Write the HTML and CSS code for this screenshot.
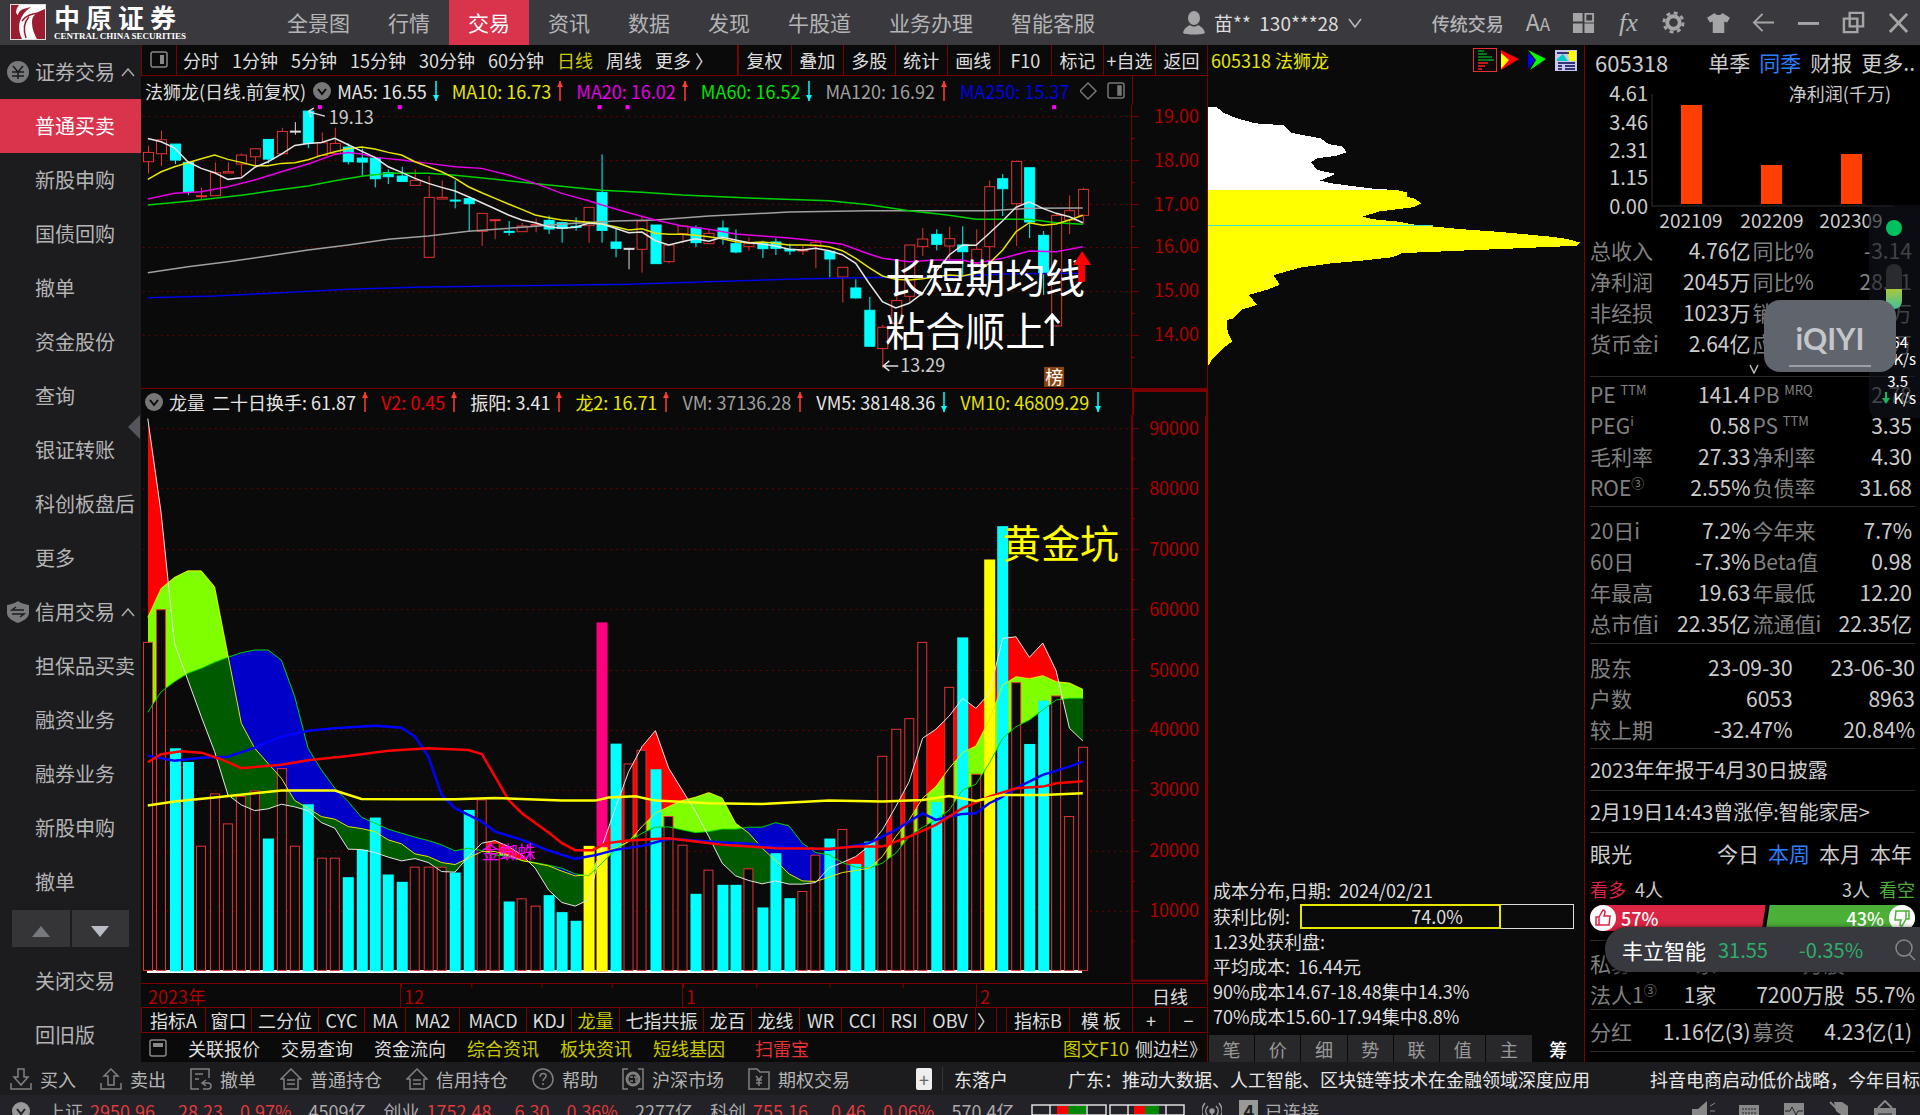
FILE: index.html
```
<!DOCTYPE html>
<html lang="zh-CN">
<head>
    <meta charset="UTF-8">
    <meta name="viewport" content="width=device-width, initial-scale=1.0">
    <title>中原证券 - 法狮龙 605318</title>
    <link rel="stylesheet" href="styles.css">
</head>
<body>
    <svg class="sprite" aria-hidden="true">
        <symbol id="i-up" viewBox="0 0 6 22"><path d="M3 1v20" stroke="#ff3c32" stroke-width="1.5"/><path d="M0 7l3-6 3 6z" fill="#ff3c32"/></symbol>
        <symbol id="i-down" viewBox="0 0 6 22"><path d="M3 1v20" stroke="#00ffff" stroke-width="1.5"/><path d="M0 15l3 6 3-6z" fill="#00ffff"/></symbol>
        <symbol id="i-drop" viewBox="0 0 18 18"><circle cx="9" cy="9" r="9" fill="#777"/><path d="M5 7l4 5 4-5" fill="none" stroke="#0a0a0a" stroke-width="2"/></symbol>
        <symbol id="i-pane" viewBox="0 0 18 18"><rect x="1" y="1" width="16" height="15" rx="2" fill="none" stroke="#888" stroke-width="1.5"/><path d="M10 4h4v9h-4z" fill="#888"/></symbol>
        <symbol id="i-house" viewBox="0 0 22 22"><path d="M1 11L11 1l10 10h-3v10H4V11zM7 12h8M7 16h8" /></symbol>
    </svg>

    <header class="topbar">
        <div class="brand">
            <svg class="brand-mark" viewBox="0 0 36 36">
                <rect x=".5" y=".5" width="35" height="35" fill="#9c1c30" stroke="#ddd"/>
                <path d="M12 35C7 24 8 12 21 3c-9 2-12 3-13 8C5 9 6 5 9 1h17l9 0v4c-9 3-13 7-13 13 0 8 3 13 5 17z" fill="#fff"/>
                <path d="M12 17c4-6 12-8 20-8M16 34c-3-9-2-16 3-21" fill="none" stroke="#9c1c30" stroke-width="1.5"/>
            </svg>
            <div>
                <div class="brand-cn"><span>中</span><span>原</span><span>证</span><span>券</span></div>
                <div class="brand-en">CENTRAL CHINA SECURITIES</div>
            </div>
        </div>
        <nav class="main-nav">
            <a href="#">全景图</a>
            <a href="#">行情</a>
            <a href="#" class="active">交易</a>
            <a href="#">资讯</a>
            <a href="#">数据</a>
            <a href="#">发现</a>
            <a href="#">牛股道</a>
            <a href="#">业务办理</a>
            <a href="#">智能客服</a>
        </nav>
        <button class="user">
            <svg width="22" height="24" viewBox="0 0 22 24" fill="#a5a5a8"><ellipse cx="11" cy="7" rx="6" ry="7"/><path d="M0 22c1-5 5-7 7-8 2 2 6 2 8 0 2 1 6 3 7 8-3 2-19 2-22 0z"/></svg>
            <span>苗**&nbsp; 130***28</span>
            <svg width="14" height="10" viewBox="0 0 14 10" fill="none" stroke="#bbb" stroke-width="1.5"><path d="M1 1l6 8 6-8"/></svg>
        </button>
        <div class="tools">
            <a href="#">传统交易</a>
            <button aria-label="字体"><span class="font-big">A</span><span class="font-small">A</span></button>
            <button aria-label="版面"><svg viewBox="0 0 24 24" fill="#a5a5a8"><path d="M1 2h10v9H1zM1 13h10v10H1zM13 13h10v10H13z"/><path d="M14 3h8v8h-8z" fill="none" stroke="#a5a5a8" stroke-width="2"/></svg></button>
            <button aria-label="公式" class="fx">fx</button>
            <button aria-label="设置"><svg viewBox="0 0 24 24" fill="none" stroke="#a5a5a8"><circle cx="12" cy="12" r="6.5" stroke-width="4"/><circle cx="12" cy="12" r="10" stroke-width="3" stroke-dasharray="4 3.85"/></svg></button>
            <button aria-label="皮肤"><svg viewBox="0 0 24 24" fill="#a5a5a8"><path d="M8 2c1 3 7 3 8 0l8 5-3 5-3-1v12H6V11l-3 1-3-5z"/></svg></button>
            <button aria-label="返回"><svg viewBox="0 0 24 24" fill="none" stroke="#a5a5a8" stroke-width="2"><path d="M23 12H2M11 3l-9 9 9 9"/></svg></button>
            <button aria-label="最小化"><svg viewBox="0 0 24 24" stroke="#a5a5a8" stroke-width="3"><path d="M1 13h22"/></svg></button>
            <button aria-label="还原"><svg viewBox="0 0 24 24" fill="none" stroke="#a5a5a8" stroke-width="2.5"><path d="M8 2h14v14H8zM2 8h14v14H2z"/></svg></button>
            <button aria-label="关闭"><svg viewBox="0 0 24 24" stroke="#a5a5a8" stroke-width="3"><path d="M3 3l18 19M21 3L3 22"/></svg></button>
        </div>
    </header>

    <main class="workspace">
        <nav class="sidebar">
            <a href="#" class="group">
                <svg width="22" height="22" viewBox="0 0 22 22"><circle cx="11" cy="11" r="11" fill="#77797b"/><path d="M6 5l5 6 5-6M5 11h12M5 15h12M11 11v7" fill="none" stroke="#1c1c1f" stroke-width="1.5"/></svg>
                证券交易
                <svg width="14" height="9" viewBox="0 0 14 9" fill="none" stroke="#aaa" stroke-width="1.5"><path d="M1 8l6-7 6 7"/></svg>
            </a>
            <a href="#" class="active">普通买卖</a>
            <a href="#">新股申购</a>
            <a href="#">国债回购</a>
            <a href="#">撤单</a>
            <a href="#">资金股份</a>
            <a href="#">查询</a>
            <a href="#">银证转账</a>
            <a href="#">科创板盘后</a>
            <a href="#">更多</a>
            <a href="#" class="group">
                <svg width="22" height="22" viewBox="0 0 22 22"><path d="M11 0c4 3 7 3 11 4v8c0 5-6 8-11 10C6 20 0 17 0 12V4c4-1 7-1 11-4z" fill="#77797b"/><path d="M17 9H5l4-3M5 13h12l-4 3" fill="none" stroke="#1c1c1f" stroke-width="1.5"/></svg>
                信用交易
                <svg width="14" height="9" viewBox="0 0 14 9" fill="none" stroke="#aaa" stroke-width="1.5"><path d="M1 8l6-7 6 7"/></svg>
            </a>
            <a href="#">担保品买卖</a>
            <a href="#">融资业务</a>
            <a href="#">融券业务</a>
            <a href="#">新股申购</a>
            <a href="#">撤单</a>
            <div class="pager">
                <button aria-label="上翻"><svg width="18" height="11" viewBox="0 0 18 11" fill="#77797f"><path d="M0 11L9 0l9 11z"/></svg></button>
                <button aria-label="下翻"><svg width="18" height="11" viewBox="0 0 18 11" fill="#b9bcc4"><path d="M0 0l9 11 9-11z"/></svg></button>
            </div>
            <a href="#">关闭交易</a>
            <a href="#">回旧版</a>
            <button class="collapse" aria-label="收起"></button>
        </nav>

        <section class="chart-col">
            <div class="period-bar">
                <button class="pane-btn" aria-label="侧栏"><svg width="18" height="18"><use href="#i-pane"/></svg></button>
                <div class="periods">
                    <button>分时</button><button>1分钟</button><button>5分钟</button><button>15分钟</button><button>30分钟</button><button>60分钟</button><button class="on">日线</button><button>周线</button><button>更多&nbsp;〉</button>
                </div>
                <div class="actions">
                    <button>复权</button><button>叠加</button><button>多股</button><button>统计</button><button>画线</button><button>F10</button><button>标记</button><button>+自选</button><button>返回</button>
                </div>
            </div>

            <div class="panel price-panel">
                <div class="panel-head">
                    <div class="legend">
                        <span class="title">法狮龙(日线.前复权)</span>
                        <svg class="drop" width="18" height="18"><use href="#i-drop"/></svg>
                        <span class="white">MA5: 16.55<svg><use href="#i-down"/></svg></span>
                        <span class="yellow">MA10: 16.73<svg><use href="#i-up"/></svg></span>
                        <span class="magenta">MA20: 16.02<svg><use href="#i-up"/></svg></span>
                        <span class="green">MA60: 16.52<svg><use href="#i-down"/></svg></span>
                        <span class="gray">MA120: 16.92<svg><use href="#i-up"/></svg></span>
                        <span class="blue clipped">MA250: 15.37</span>
                        <svg class="drop" width="46" height="20" viewBox="0 0 46 20" fill="none" stroke="#777" stroke-width="1.5"><path d="M8 2l8 8-8 8-8-8z"/><rect x="28" y="2" width="16" height="15" rx="2"/><path d="M38 5h3v9h-3z" fill="#777"/></svg>
                    </div>
                    <div class="axis-cap"></div>
                </div>
                <svg class="plot" id="price" viewBox="141 105 1067 283" role="img" aria-label="日线价格图"></svg>
            </div>

            <div class="panel volume-panel">
                <div class="panel-head">
                    <div class="legend">
                        <svg class="drop" width="18" height="18"><use href="#i-drop"/></svg>
                        <span class="title">龙量</span>
                        <span class="white">二十日换手: 61.87<svg><use href="#i-up"/></svg></span>
                        <span class="red">V2: 0.45<svg><use href="#i-up"/></svg></span>
                        <span class="white">振阳: 3.41<svg><use href="#i-up"/></svg></span>
                        <span class="yellow">龙2: 16.71<svg><use href="#i-up"/></svg></span>
                        <span class="gray">VM: 37136.28<svg><use href="#i-up"/></svg></span>
                        <span class="white">VM5: 38148.36<svg><use href="#i-down"/></svg></span>
                        <span class="yellow">VM10: 46809.29<svg><use href="#i-down"/></svg></span>
                    </div>
                    <div class="axis-cap heavy"></div>
                </div>
                <svg class="plot" id="volume" viewBox="141 415 1067 568" role="img" aria-label="成交量图"></svg>
            </div>

            <div class="date-row">
                <span>2023年</span><span class="ticks">12</span><span class="ticks">1</span><span>2</span><button>日线</button>
            </div>

            <div class="indicator-row">
                <button>指标A</button><button>窗口</button><button>二分位</button><button>CYC</button><button>MA</button><button>MA2</button><button>MACD</button><button>KDJ</button><button class="on">龙量</button><button>七指共振</button><button>龙百</button><button>龙线</button><button>WR</button><button>CCI</button><button>RSI</button><button>OBV</button><button>〉</button><i></i><button>指标B</button><button>模 板</button><button>+</button><button>−</button>
            </div>

            <div class="link-row">
                <svg width="18" height="18" viewBox="0 0 18 18"><rect x="1" y="1" width="16" height="16" rx="2" fill="none" stroke="#888" stroke-width="1.5"/><path d="M4 4h10v4H4z" fill="#888"/></svg>
                <a href="#">关联报价</a>
                <a href="#">交易查询</a>
                <a href="#">资金流向</a>
                <a href="#" class="gold">综合资讯</a>
                <a href="#" class="gold">板块资讯</a>
                <a href="#" class="gold">短线基因</a>
                <a href="#" class="alert">扫雷宝</a>
                <a href="#" class="gold push">图文F10</a>
                <a href="#" class="side-link">侧边栏》</a>
            </div>
        </section>

        <section class="chips-col">
            <div class="chips-head">
                <h2>605318 法狮龙</h2>
                <button class="picked" aria-label="筹码分布"><svg width="22" height="22" viewBox="0 0 22 22" fill="none" stroke-width="1.5"><path d="M4 2h6M4 5h9M4 8h14M4 11h16" stroke="#009a20"/><path d="M4 14h10M4 17h7M4 20h4" stroke="#ff2020"/></svg></button>
                <button aria-label="成本"><svg width="18" height="20" viewBox="0 0 18 20"><path d="M0 0l18 9L0 20z" fill="#f00"/><path d="M0 3l8 7-8 9z" fill="#ff0"/></svg></button>
                <button aria-label="周期"><svg width="18" height="20" viewBox="0 0 18 20"><path d="M0 0l18 9L2 20l6-10z" fill="#0f0"/><path d="M0 3l7 7-7 9z" fill="#00f"/></svg></button>
                <button aria-label="设置"><svg width="22" height="21" viewBox="0 0 22 21"><path d="M0 0h22v21H0z" fill="#c8c8e8"/><path d="M12 1h9v10h-6z" fill="#ff0"/><path d="M2 9l6-5 5 7H2z" fill="#0cc"/><path d="M2 3h12M3 13h17M3 16h4M10 16h10M3 19h4M10 19h10" stroke="#005" stroke-width="1.5"/></svg></button>
            </div>
            <svg class="chips" viewBox="17 300 820 820" preserveAspectRatio="none" shape-rendering="crispEdges" role="img" aria-label="筹码分布图">
                <path fill="#fff" d="M17 320L35 320 50 338 80 355 120 370 183 376 198 398 230 407 262 415 280 432 310 440 320 457 295 468 255 475 242 487 255 510 295 522 262 542 285 550 330 558 375 566 430 571H17z"/>
                <path fill="#ff0" d="M17 571L430 571 452 578 452 590 470 598 482 610 465 622 390 635 355 650 375 658 430 665 470 675 508 680 570 688 660 697 760 710 800 717 828 728 820 738 700 745 560 753 440 760 420 772 350 783 290 790 220 803 180 818 160 826 173 855 150 868 105 886 125 915 90 930 70 958 58 960 60 1000 70 1025 50 1045 25 1080 17 1100z"/>
                <path d="M17 677H508" stroke="#40e0c0" stroke-width="4"/>
            </svg>
            <div class="cost-info">
                <p>成本分布,日期:&nbsp; 2024/02/21</p>
                <div class="profit-line"><span id="profit-label">获利比例:</span><div class="profit-box" role="meter" aria-labelledby="profit-label" aria-valuenow="74"><i style="width:74%"></i><b>74.0%</b></div></div>
                <p>1.23处获利盘:</p>
                <p>平均成本:&nbsp; 16.44元</p>
                <p>90%成本14.67-18.48集中14.3%</p>
                <p>70%成本15.60-17.94集中8.8%</p>
            </div>
            <div class="chip-tabs">
                <button>笔</button><button>价</button><button>细</button><button>势</button><button>联</button><button>值</button><button>主</button><button class="on">筹</button>
            </div>
        </section>

        <aside class="info-col">
            <div class="info-head">
                <h2>605318</h2>
                <button>单季</button><button class="on">同季</button><button>财报</button><button>更多..</button>
            </div>
            <svg class="profit-chart" viewBox="1585 79 335 155" role="img" aria-label="净利润">
                <path d="M1652 94V206H1893" fill="none" stroke="#333"/>
                <g fill="#ff4000"><path d="M1681 105h21v99h-21zM1761 165h21v39h-21zM1841 154h21v50h-21z"/></g>
                <g fill="#ccc" font-size="20" text-anchor="end">
                    <text x="1648" y="101">4.61</text><text x="1648" y="130">3.46</text><text x="1648" y="158">2.31</text><text x="1648" y="185">1.15</text><text x="1648" y="214">0.00</text>
                    <text x="1891" y="101" font-size="18">净利润(千万)</text>
                </g>
                <g fill="#ccc" font-size="19" text-anchor="middle"><text x="1691" y="228">202109</text><text x="1772" y="228">202209</text><text x="1851" y="228">202309</text></g>
            </svg>
            <table class="facts">
                <tr><th>总收入</th><td>4.76亿</td><th>同比%</th><td class="dim">-3.14</td></tr>
                <tr><th>净利润</th><td>2045万</td><th>同比%</th><td class="dim">28.41</td></tr>
                <tr><th>非经损</th><td>1023万</td><th>销售额</th><td class="dim">1.2万</td></tr>
                <tr><th>货币金i</th><td>2.64亿</td><th>应收款</th><td class="dim">64万</td></tr>
            </table>
            <button class="more" aria-label="展开"><svg width="10" height="10" viewBox="0 0 10 10" fill="none" stroke="#bbb" stroke-width="1.5"><path d="M1 1l4 8 4-8"/></svg></button>
            <table class="facts ratios">
                <tr><th>PE <sup>TTM</sup></th><td>141.4</td><th>PB <sup>MRQ</sup></th><td class="dim">2.78</td></tr>
                <tr><th>PEG<sup>i</sup></th><td>0.58</td><th>PS <sup>TTM</sup></th><td>3.35</td></tr>
                <tr><th>毛利率</th><td>27.33</td><th>净利率</th><td>4.30</td></tr>
                <tr><th>ROE<sup>③</sup></th><td>2.55%</td><th>负债率</th><td>31.68</td></tr>
            </table>
            <table class="facts wide-gap">
                <tr><th>20日i</th><td>7.2%</td><th>今年来</th><td>7.7%</td></tr>
                <tr><th>60日</th><td>-7.3%</td><th>Beta值</th><td>0.98</td></tr>
                <tr><th>年最高</th><td>19.63</td><th>年最低</th><td>12.20</td></tr>
                <tr><th>总市值i</th><td>22.35亿</td><th>流通值i</th><td>22.35亿</td></tr>
            </table>
            <table class="facts holders">
                <tr><th>股东</th><td>23-09-30</td><td>23-06-30</td></tr>
                <tr><th>户数</th><td>6053</td><td>8963</td></tr>
                <tr><th>较上期</th><td>-32.47%</td><td>20.84%</td></tr>
            </table>
            <a href="#" class="notice">2023年年报于4月30日披露</a>
            <a href="#" class="notice">2月19日14:43曾涨停:智能家居&gt;</a>
            <div class="vote">
                <div class="vote-head"><span>眼光</span><button>今日</button><button class="on">本周</button><button>本月</button><button>本年</button></div>
                <div class="vote-count"><b class="bull">看多</b><span>4人</span><span class="push">3人</span><b class="bear">看空</b></div>
                <div class="vote-bar">
                    <div class="bull-bar" style="flex-grow:57">
                        <svg width="26" height="26" viewBox="0 0 26 26"><circle cx="13" cy="13" r="13" fill="#fff"/><path d="M6 12h3v8H6zM9 12l4-7c3 0 2 3 1 6h6l-1 9H9" fill="none" stroke="#dc2444" stroke-width="1.5"/></svg>57%</div>
                    <div class="bear-bar" style="flex-grow:43">43%<svg width="26" height="26" viewBox="0 0 26 26"><circle cx="13" cy="13" r="13" fill="#fff"/><path d="M20 14h-3V6h3zM17 14l-4 7c-3 0-2-3-1-6H6l1-9h10" fill="none" stroke="#4caf37" stroke-width="1.5"/></svg></div>
                </div>
            </div>
            <table class="facts owners">
                <tr><th>私募</th><td>2家</td><td>171万股</td><td>3.2%</td></tr>
                <tr><th>法人1<sup>③</sup></th><td>1家</td><td>7200万股</td><td>55.7%</td></tr>
            </table>
            <table class="facts payout">
                <tr><th>分红</th><td>1.16亿(3)</td><th>募资</th><td>4.23亿(1)</td></tr>
            </table>
        </aside>
    </main>

    <footer class="quickbar">
        <a href="#"><svg viewBox="0 0 22 22"><path d="M1 15v6h20v-6M8 1h6v8h4l-7 8-7-8h4z"/></svg>买入</a>
        <a href="#"><svg viewBox="0 0 22 22"><path d="M1 15v6h20v-6M8 17V8H4l7-7 7 7h-4v9z"/></svg>卖出</a>
        <a href="#"><svg viewBox="0 0 22 22"><path d="M9 21H1V1h18v9M5 6h8M5 11h4M13 15h5a3 3 0 010 6h-5M16 12l-4 3 4 3"/></svg>撤单</a>
        <a href="#"><svg><use href="#i-house"/></svg>普通持仓</a>
        <a href="#"><svg><use href="#i-house"/></svg>信用持仓</a>
        <a href="#"><svg viewBox="0 0 22 22"><circle cx="11" cy="11" r="10"/><path d="M8 9c0-5 7-4 6-1 0 2-3 3-3 5M11 15v2"/></svg>帮助</a>
        <a href="#"><svg viewBox="0 0 22 22"><path d="M6 1H1v20h5M16 1h5v20h-5"/><circle cx="11" cy="11" r="6" stroke-width="3"/><path d="M8 9h3M8 13h3M12 9h3M14 9v5"/></svg>沪深市场</a>
        <a href="#"><svg viewBox="0 0 22 22"><path d="M1 1h8l3 3h9v17H1zM8 8l3 4 3-4M8 12h6M8 15h6M11 12v6"/></svg>期权交易</a>
        <button class="add" aria-label="添加">+</button>
        <div class="ticker"><span>东落户</span><span>广东：推动大数据、人工智能、区块链等技术在金融领域深度应用</span><span>抖音电商启动低价战略，今年目标</span></div>
    </footer>

    <div class="status">
        <div class="status-in">
            <svg width="18" height="18" viewBox="0 0 18 18"><circle cx="9" cy="9" r="9" fill="#999"/><path d="M5 7l4 5 4-5" fill="none" stroke="#222228" stroke-width="2"/></svg>
            <span>上证</span><b>2950.96</b><b>28.23</b><b>0.97%</b><span>4509亿</span>
            <span>创业</span><b>1752.48</b><b>6.30</b><b>0.36%</b><span>2277亿</span>
            <span>科创</span><b>755.16</b><b>0.46</b><b>0.06%</b><span>570.4亿</span>
            <svg width="154" height="14" viewBox="0 0 154 14"><path d="M26 2h11v8H26zM103 2h11v8h-11z" fill="#f00"/><path d="M37 2h18v8H37zM114 2h14v8h-14z" fill="#080"/><path d="M1 1h74v10H1zM19 1v10M56 1v10M79 1h74v10H79zM97 1v10M135 1v10" fill="none" stroke="#ddd" stroke-width="1.5"/><path d="M4 14h70M82 14h70" stroke="#080" stroke-width="2"/></svg>
            <svg width="20" height="20" viewBox="0 0 20 20" fill="none" stroke="#999" stroke-width="1.5"><circle cx="10" cy="10" r="2" fill="#999"/><path d="M6 5c-3 3-3 7 0 10M14 5c3 3 3 7 0 10M3 2c-4 5-4 11 0 16M17 2c4 5 4 11 0 16M10 12v8"/></svg>
            <em>4</em><span class="conn">已连接</span>
            <svg class="status-icons" width="206" height="22" viewBox="0 0 206 22" fill="#888">
                <path d="M0 9h6l9-8v20l-9-6H0z"/><path d="M18 6l5-3M18 11h5M18 15l5 3" stroke="#888"/>
                <path d="M47 5h20v14H47z"/><path d="M50 9h14M50 13h14" stroke="#222228" stroke-dasharray="2 1"/>
                <path d="M92 3h20v16H92z"/><path d="M93 11h5l2-4 4 8 2-4h5" fill="none" stroke="#222228"/>
                <path d="M142 2h8l6 4v14l-12-9z"/><path d="M138 2l18 18" stroke="#888" stroke-width="2"/>
                <path d="M182 8h22v13h-22z"/><path d="M186 8l7-7 7 7" fill="none" stroke="#888" stroke-width="2"/><path d="M186 14h14" stroke="#222228"/>
            </svg>
        </div>
    </div>

    <!-- desktop widgets floating above the terminal -->
    <div class="net-widget">
        <i class="dot"></i>
        <i class="gauge"></i>
        <p><b>64</b><small>K/s</small></p>
        <p><b>3.5</b><small><svg width="8" height="12" viewBox="0 0 8 12" fill="#12b85c"><path d="M3 0h2v6h3l-4 6-4-6h3z"/></svg> K/s</small></p>
    </div>
    <div class="iqiyi">iQIYI</div>
    <div class="stock-toast"><b>丰立智能</b><span>31.55</span><span>-0.35%</span>
        <svg width="22" height="22" viewBox="0 0 22 22" fill="none" stroke="#888" stroke-width="1.5"><circle cx="10" cy="9" r="8"/><path d="M15 15l6 6"/></svg>
    </div>

    <script src="script.js"></script>
</body>
</html>
```
FILE: styles.css
```
* {
    margin: 0;
    padding: 0;
    box-sizing: border-box;
}

body {
    display: grid;
    grid-template-rows: 45px minmax(0, 1fr) 33px 20px;
    height: 100vh;
    overflow: hidden;
    background: #0a0a0a;
    color: #ddd;
    font-family: "Noto Sans CJK SC", "Liberation Sans", sans-serif;
    font-size: 18px;
    line-height: 24px;
    white-space: nowrap;
}

a {
    color: inherit;
    text-decoration: none;
}

button {
    background: none;
    border: none;
    color: inherit;
    font: inherit;
    cursor: pointer;
}

svg {
    flex: none;
}

.sprite {
    position: absolute;
    width: 0;
    height: 0;
}

.white { color: #e6e6e6; }
.yellow { color: #e6e600; }
.magenta { color: #e600e6; }
.green { color: #00e600; }
.gray { color: #a0a0a0; }
.blue { color: #0000e6; }
.red { color: #e60000; }
.push { margin-left: auto; }

/* Top bar */
.topbar {
    display: flex;
    align-items: center;
    background: #3a3a3e;
    color: #b4b4b6;
}

.brand {
    display: flex;
    gap: 8px;
    width: 268px;
    padding-left: 10px;
    color: #fff;
}

.brand-mark {
    width: 36px;
    height: 36px;
}

.brand-cn {
    display: flex;
    gap: 6px;
    font-size: 26px;
    font-weight: 700;
    line-height: 26px;
}

.brand-en {
    font: bold 9px/12px "Liberation Serif", serif;
}

.main-nav {
    display: flex;
    height: 100%;
}

.main-nav a {
    padding: 0 19px;
    font-size: 21px;
    line-height: 45px;
}

.main-nav .active {
    background: #da334c;
    color: #fff;
}

.user {
    display: flex;
    align-items: center;
    gap: 9px;
    margin-left: auto;
    color: #ddd;
    font-size: 19px;
}

.tools {
    display: flex;
    align-items: center;
    gap: 22px;
    margin-left: 70px;
    padding-right: 10px;
}

.tools svg {
    display: block;
    width: 23px;
    height: 23px;
}

.tools .fx {
    width: 23px;
    font: italic 26px/26px "Liberation Serif", serif;
}

.tools a {
    font-weight: 500;
}

.font-big {
    font-size: 23px;
}

.font-small {
    font-size: 17px;
}

/* Layout */
.workspace {
    display: grid;
    grid-template-columns: 141px minmax(0, 1fr) 377px 335px;
    min-height: 0;
}

.sidebar {
    position: relative;
    display: flex;
    flex-direction: column;
    background: #1c1c1f;
    color: #b4b4b4;
    font-size: 20px;
}

.sidebar a {
    height: 54px;
    padding-left: 35px;
    line-height: 54px;
}

.sidebar .active {
    background: #da334c;
    color: #fff;
}

.sidebar .group {
    display: flex;
    align-items: center;
    gap: 6px;
    padding-left: 7px;
}

.pager {
    display: flex;
    gap: 2px;
    margin: 1px 12px 7px 12px;
}

.pager button {
    flex: 1;
    height: 37px;
    background: #353537;
}

.collapse {
    position: absolute;
    top: 370px;
    right: 1px;
    border: 12px solid transparent;
    border-left: none;
    border-right-color: #55555a;
}

/* Chart column */
.chart-col {
    display: grid;
    grid-template-rows: 31px minmax(0, 313fr) minmax(0, 594fr) 24px 26px 29px;
    border: solid #7c0000;
    border-width: 0 1px 0 0;
}

.period-bar {
    display: flex;
    border-bottom: 1px solid #7c0000;
    border-left: 1px solid #7c0000;
}

.pane-btn {
    width: 35px;
    border-right: 1px solid #7c0000;
}

.pane-btn svg {
    display: block;
    margin: auto;
}

.periods {
    flex: 559;
    display: flex;
    gap: 13px;
    padding-left: 6px;
    overflow: hidden;
}

.actions {
    flex: 473;
    display: grid;
    grid-template-columns: repeat(9, 1fr);
    border-left: 2px solid #7c0000;
}

.actions button + button {
    border-left: 1px solid #7c0000;
}

.periods .on, .indicator-row .on {
    color: #c8c800;
}

.panel {
    display: flex;
    flex-direction: column;
    min-height: 0;
}

.price-panel {
    border-bottom: 1px solid #7c0000;
}

.panel-head {
    display: grid;
    grid-template-columns: minmax(0, 1fr) 75px;
    height: 29px;
}

.volume-panel .panel-head {
    height: 26px;
}

.legend {
    display: flex;
    align-items: center;
    padding-left: 4px;
    overflow: hidden;
}

.legend span {
    display: flex;
    align-items: center;
    margin-right: 13px;
}

.legend span svg {
    width: 6px;
    height: 22px;
    margin-left: 6px;
}

.legend .title {
    margin-right: 7px;
}

.legend .drop {
    margin-right: 6px;
}

.legend .clipped {
    flex: 1;
    min-width: 0;
    margin-right: 0;
    overflow: hidden;
}

.axis-cap {
    border-left: 1px solid #7c0000;
}

.axis-cap.heavy {
    border: solid #7c0000;
    border-width: 3px 1px 0 2px;
}

.plot {
    flex: 1;
    display: block;
    width: 100%;
    min-height: 0;
}

.date-row {
    display: grid;
    grid-template-columns: 259fr 282fr 294fr 156fr 75fr;
    border-top: 1px solid #7c0000;
    color: #b00000;
}

.date-row span {
    padding-left: 3px;
}

.date-row span:first-child {
    padding-left: 7px;
}

.date-row span + span, .date-row button {
    border-left: 1px solid #7c0000;
}

.date-row button {
    color: #ddd;
}

.ticks {
    background: linear-gradient(90deg, #7c0000 1px, transparent 1px) 0 0 / 25% 4px repeat-x;
}

.indicator-row {
    display: grid;
    grid-template-columns: 64fr 46fr 67fr 46fr 41fr 54fr 67fr 45fr 48fr 84fr 48fr 48fr 42fr 42fr 41fr 51fr 21fr 10fr 63fr 63fr 37fr 38fr;
    border: solid #7c0000;
    border-width: 1px 0;
}

.indicator-row > * {
    min-width: 0;
    border-left: 1px solid #7c0000;
}

.link-row {
    display: flex;
    align-items: center;
    gap: 21px;
    padding: 0 8px;
}

.link-row .alert {
    margin-left: 9px;
    color: #e63232;
}

.gold {
    color: #c8c800;
}

.side-link {
    margin: 0 -8px 0 -15px;
}

/* Chip distribution */
.chips-col {
    display: flex;
    flex-direction: column;
    border-right: 1px solid #7c0000;
}

.chips-head {
    display: flex;
    align-items: center;
    gap: 9px;
    height: 30px;
    padding: 0 7px 0 3px;
}

.chips-head h2 {
    flex: 1;
    color: #e6e600;
    font-size: 18px;
    font-weight: 400;
}

.chips-head svg {
    display: block;
}

.chips-head .picked {
    border: 1px solid #e63232;
    margin-right: -5px;
}

.chips {
    width: 100%;
    height: 273px;
    margin-top: 25px;
}

.cost-info {
    margin-top: auto;
    padding: 0 10px 6px 5px;
}

.cost-info p {
    line-height: 25px;
}

.profit-line {
    display: flex;
    align-items: center;
    gap: 10px;
    height: 26px;
}

.profit-box {
    flex: 1;
    display: grid;
    height: 25px;
    border: 1px solid #ddd;
}

.profit-box i {
    grid-area: 1 / 1;
    margin: -1px;
    border: 2px solid #e6e600;
}

.profit-box b {
    grid-area: 1 / 1;
    font-weight: 400;
    line-height: 23px;
    text-align: center;
}

.chip-tabs {
    display: grid;
    grid-template-columns: repeat(7, 45fr) 51fr;
    gap: 1px;
    padding-left: 1px;
    color: #999;
}

.chip-tabs button {
    height: 27px;
    background: #28282b;
}

.chip-tabs .on {
    background: none;
    color: #fff;
    font-weight: 500;
}

/* Fundamentals */
.info-col {
    display: flex;
    flex-direction: column;
    padding: 0 5px;
    background: #000;
    color: #ccc;
    font-size: 21px;
}

.info-head {
    display: flex;
    align-items: center;
    gap: 9px;
    height: 34px;
}

.info-head h2 {
    flex: 1;
    padding-left: 5px;
    font-size: 22px;
    font-weight: 400;
}

.info-head .on, .vote-head .on {
    color: #2a80ff;
}

.profit-chart {
    display: block;
    margin: 0 -5px;
}

.facts {
    width: 100%;
    border-spacing: 0;
    table-layout: fixed;
}

.facts tr {
    height: 31px;
}

.facts th {
    color: #808080;
    font-weight: 400;
    text-align: left;
}

.facts td {
    text-align: right;
    padding-right: 2px;
}

.facts th, .facts td {
    width: 25%;
}

.facts td:last-child {
    padding-right: 3px;
}

.facts .dim {
    color: #888;
}

.facts sup {
    font-size: 13px;
    line-height: 12px;
}

.more {
    height: 18px;
    padding-left: 2px;
    line-height: 8px;
}

.facts.ratios, .facts.wide-gap, .facts.holders, .facts.owners, .facts.payout {
    border-top: 1px solid #2a2a2a;
}

.ratios {
    padding: 1px 0 4px;
}

.wide-gap {
    padding: 7px 0 5px;
}

.holders {
    padding: 7px 0 4px;
}

.facts.holders th {
    width: 80px;
}

.facts.holders td {
    width: 122px;
    padding-right: 0;
}

.notice {
    height: 42px;
    border-top: 1px solid #2a2a2a;
    font-size: 20px;
    line-height: 42px;
}

.vote {
    border-top: 1px solid #2a2a2a;
    padding-bottom: 9px;
}

.vote-head, .vote-count {
    display: flex;
    align-items: center;
    gap: 9px;
    height: 40px;
}

.vote-head {
    padding-right: 3px;
}

.vote-head span {
    margin-right: auto;
}

.vote-count {
    height: 32px;
    font-size: 18px;
}

.vote-count b {
    font-weight: 400;
}

.bull {
    color: #dc2444;
}

.bear {
    color: #4caf37;
}

.vote-bar {
    display: flex;
    color: #fff;
    font-size: 18px;
    font-weight: 500;
}

.bull-bar, .bear-bar {
    display: flex;
    align-items: center;
    gap: 5px;
    height: 26px;
    background: #dc2444;
    border-radius: 13px 0 0 13px;
    clip-path: polygon(0 0, 100% 0, calc(100% - 4px) 100%, 0 100%);
}

.bear-bar {
    justify-content: flex-end;
    background: #4caf37;
    border-radius: 0 13px 13px 0;
    clip-path: polygon(4px 0, 100% 0, 100% 100%, 0 100%);
}

.owners {
    padding: 6px 0 0;
}

.facts.owners th {
    width: 72px;
}

.facts.owners td {
    width: 54px;
    padding-right: 0;
}

.facts.owners td:nth-child(3) {
    width: 128px;
}

.facts.owners td:last-child {
    width: 70px;
}

.facts.payout {
    padding: 5px 0;
    border-bottom: 1px solid #2a2a2a;
}

.facts.payout th {
    width: 45px;
}

.facts.payout td {
    width: 115px;
}

/* Bottom bars */
.quickbar {
    display: flex;
    align-items: center;
    gap: 24px;
    padding-left: 10px;
    overflow: hidden;
    background: #1c1c1f;
    color: #b4b4b4;
}

.quickbar a {
    display: flex;
    align-items: center;
    gap: 8px;
}

.quickbar svg {
    width: 22px;
    height: 22px;
    fill: none;
    stroke: #808080;
    stroke-width: 1.5;
}

.add {
    width: 22px;
    height: 22px;
    margin-left: 42px;
    background: #eee;
    border-radius: 2px;
    color: #666;
    line-height: 20px;
}

.ticker {
    display: flex;
    gap: 60px;
    margin-left: -14px;
    padding-left: 11px;
    border-left: 1px solid #333;
    color: #e6e6e6;
}

.status {
    overflow: hidden;
    background: #222228;
    color: #aaa;
}

.status-in {
    display: flex;
    align-items: center;
    gap: 17px;
    height: 32px;
    padding-left: 12px;
}

.status b {
    color: #e03c3c;
    font-weight: 400;
}

.status b:nth-of-type(3n + 1) {
    margin-left: -10px;
    margin-right: 6px;
}

.status em {
    padding: 0 4px;
    background: #999;
    color: #222;
    font-style: normal;
    font-weight: 700;
    line-height: 22px;
}

.conn {
    margin-left: -10px;
}

.status-icons {
    margin: 0 22px 0 auto;
}

/* Floating widgets */
.net-widget {
    position: absolute;
    top: 205px;
    right: 0;
    width: 51px;
    height: 213px;
    padding: 15px 4px 0 12px;
    background: rgba(18, 20, 28, 0.6);
    border-radius: 10px 0 0 10px;
    color: #fff;
    font-size: 16px;
    line-height: 17px;
    text-align: right;
}

.net-widget i {
    display: block;
    width: 16px;
    margin-left: 5px;
}

.dot {
    height: 16px;
    border-radius: 50%;
    background: #00c060;
}

.gauge {
    height: 45px;
    margin: 28px 0 24px;
    border-radius: 8px;
    background: linear-gradient(#2a2b2f 55%, #a8c838 55%, #40c0a0);
}

.net-widget b, .net-widget small {
    display: block;
    font-size: 15px;
    font-weight: 400;
}

.net-widget b {
    padding-right: 8px;
}

.net-widget p + p {
    margin-top: 5px;
}

.iqiyi {
    position: absolute;
    top: 300px;
    right: 24px;
    width: 132px;
    height: 72px;
    padding: 20px 25px 0;
    border-radius: 16px;
    background: #60646c;
    color: #c4c6ca;
    font: bold 30px/36px Lato, sans-serif;
    text-align: center;
}

.iqiyi::after {
    content: "";
    display: block;
    height: 2px;
    margin-top: 9px;
    background: #9b9ea3;
}

.stock-toast {
    position: absolute;
    top: 927px;
    right: 0;
    display: flex;
    align-items: center;
    width: 315px;
    height: 45px;
    padding: 0 4px 0 17px;
    border-radius: 22px 0 0 22px;
    background: #38383f;
    box-shadow: 0 2px 6px #000;
    color: #2fae6a;
    font-size: 20px;
}

.stock-toast b {
    margin-right: 12px;
    color: #fff;
    font-size: 21px;
    font-weight: 400;
}

.stock-toast span + span {
    margin: 0 auto;
}
```
FILE: script.js
```
// Series are stored in thirds of a plot unit, one value per trading day.
const X0 = 147.8, STEP = 13.37;
const x = i => X0 + i * STEP;
const RED = '#e63232', CYAN = '#00ffff', BG = '#0a0a0a', AXIS = '#7c0000';

// [kind, high, body top, body bottom, low]
const candles = [
    ['r',437,457,485,520],['r',391,419,461,498],['c',432,432,480,492],['c',487,487,577,585],['r',563,587,587,600],
    ['r',487,518,587,587],['r',487,515,519,519],['r',460,465,492,530],['r',446,446,470,495],['c',418,418,477,490],
    ['r',383,394,461,461],['w',366,393,393,404],['c',333,333,430,444],['r',397,428,466,466],['r',383,430,460,460],
    ['c',430,441,485,493],['c',445,474,486,527],['c',470,474,536,562],['c',508,518,530,552],['c',500,528,544,544],
    ['r',508,541,556,556],['r',528,592,772,772],['r',541,592,597,597],['c',541,600,600,625],['c',590,596,611,695],
    ['r',640,640,694,738],['r',657,659,659,718],['c',663,694,694,706],['r',668,678,695,695],['r',655,673,677,697],
    ['c',647,661,687,702],['c',665,668,685,728],['c',652,679,679,692],['r',622,622,677,728],['c',463,577,691,728],
    ['c',685,726,745,772],['w',745,745,745,808],['r',648,663,748,818],['c',675,675,791,791],['r',735,735,785,790],
    ['r',675,678,701,730],['c',676,684,728,741],['r',690,700,731,731],['c',661,684,713,734],['c',688,731,756,760],
    ['r',712,731,740,752],['c',722,731,746,774],['c',715,726,745,765],['c',731,748,753,765],['r',738,750,753,765],
    ['r',722,727,738,805],['c',751,754,777,832],['r',802,802,831,908],['c',838,864,894,896],['c',891,931,1039,1039],
    ['r',975,982,1046,1105],['r',780,902,970,975],['r',735,735,889,908],['r',684,717,740,768],['c',688,703,733,751],
    ['r',680,716,738,777],['c',679,735,755,825],['r',688,748,788,800],['r',541,560,740,785],['c',522,536,566,648],
    ['r',481,484,611,738],['c',503,503,666,714],['c',693,706,820,885],['r',640,646,978,980],['r',586,632,660,702],
    ['r',563,568,646,672]
];

const ma5 = [415,425,443,485,505,518,538,533,502,485,462,436,430,427,415,434,453,472,500,517,535,550,562,573,590,608,626,645,660,668,680,685,682,670,672,685,698,696,722,735,725,716,724,712,720,728,732,738,748,750,745,752,764,790,850,905,924,910,880,815,765,735,736,700,662,622,605,625,640,650,668];
const ma10 = [538,515,500,488,476,465,478,487,497,497,490,488,479,466,455,446,441,447,457,465,485,500,515,535,560,578,595,612,628,645,653,660,663,667,672,680,690,686,700,703,703,706,710,716,725,728,726,730,735,735,736,740,752,775,803,828,838,840,836,830,825,828,820,790,750,695,668,676,672,660,646];

// sparse lines: index, value, index, value ...
const ma20 = [0,597,2,580,4,575,6,560,8,540,10,515,12,492,14,463,15,457,16,462,17,472,19,480,21,490,23,500,25,505,27,525,29,550,31,580,33,602,34,615,36,638,38,660,40,678,42,688,44,702,46,708,48,714,50,722,52,733,54,762,55,775,57,785,59,780,61,780,62,790,64,775,66,753,68,755,70,740];
const ma60 = [0,615,3,604,5,595,7,586,9,574,12,558,14,542,16,529,18,520,21,520,23,526,26,538,30,555,34,571,37,577,40,585,45,594,51,602,54,614,57,632,60,646,62,658,66,658,68,668,70,673];
const ma120 = [0,818,3,800,6,785,9,768,12,750,15,735,18,718,21,708,24,694,28,682,32,670,35,663,38,660,42,648,48,636,54,632,63,632,66,625,70,624];
const ma250 = [0,893,5,888,10,878,15,868,20,862,28,857,36,853,42,845,48,838,53,833,60,830,64,822,70,820];

const volumes = [
    'r787','r689','c1105','c1146','r1399','r1242','r1332','r1250','r1233','c1376','r1166','r1399','c1273','r1435','r1435',
    'c1492','c1410','c1313','c1484','c1506','r1462','r1462','r1462','c1478','c1290','r1260','r1390','c1565','r1557','r1579',
    'c1546','c1597','c1623','y1398','m727','c1091','r1152','r1111','c1168','r1310','r1396','c1542','r1471','c1515','c1515',
    'r1467','c1583','c1420','c1555','r1535','r1426','c1376','r1349','c1452','c1385','r1129','r1048','r1016','r787','c1267',
    'r922','c772','r1183','y538','c438','r908','c1092','c962','r948','r1310','r1102'
];
const vm5 = [115,400,790,900,1010,1115,1245,1275,1292,1287,1273,1281,1292,1328,1345,1408,1409,1418,1432,1443,1436,1448,1475,1477,1430,1390,1382,1400,1425,1465,1530,1568,1579,1560,1400,1285,1175,1100,1052,1165,1230,1295,1370,1450,1488,1502,1512,1503,1513,1513,1508,1464,1448,1430,1398,1350,1280,1205,1075,1048,1008,955,985,940,775,770,832,789,872,1045,1083];
const vm10 = [712,625,592,572,572,620,825,1030,1105,1150,1195,1262,1285,1310,1318,1340,1346,1355,1380,1392,1422,1430,1448,1454,1435,1415,1415,1425,1442,1450,1458,1474,1488,1485,1420,1405,1385,1340,1300,1280,1262,1252,1238,1254,1330,1360,1405,1442,1482,1503,1505,1492,1478,1472,1465,1430,1370,1320,1255,1220,1165,1118,1098,1020,915,890,896,887,905,909,928];
const vm20 = [997,935,905,880,865,847,832,818,810,810,840,950,1105,1170,1225,1265,1312,1330,1348,1360,1372,1382,1395,1413,1405,1412,1425,1430,1442,1448,1456,1465,1482,1488,1450,1410,1385,1360,1342,1341,1350,1358,1355,1348,1348,1342,1342,1328,1338,1390,1418,1425,1448,1462,1465,1450,1420,1370,1342,1320,1290,1230,1213,1150,1075,1040,1020,990,960,955,955];
const thickBlue = [0,1127,2,1142,4,1133,6,1130,8,1103,10,1070,12,1052,14,1045,17,1037,19,1043,20,1070,21,1130,22,1245,23,1285,24,1305,25,1325,26,1355,28,1380,30,1412,32,1437,33.6,1425,35,1410,37,1398,39,1377,41,1382,43,1388,45,1392,49,1405,51,1410,54,1390,56,1350,58,1300,59,1320,60,1310,61,1302,62,1300,63,1270,63.8,1255,65,1225,67,1185,69,1160,70,1145];
const thickRed = [0,1147,1,1123,2.5,1114,4,1118,5.5,1138,7,1165,10,1154,12,1141,15,1128,18,1112,21,1105,24,1110,25,1122,26,1190,27,1260,28,1300,30,1358,31,1390,32,1411,33.3,1411,34.3,1390,36,1382,39,1375,43,1395,47,1405,51,1407,53,1400,55,1400,57,1370,59,1335,61,1285,63,1250,65,1225,67,1220,68,1210,70,1204];
const thickYellow = [0,1277,2,1265,5,1253,8,1240,10,1232,14,1232,16,1257,19,1258,23,1258,26,1254,31,1262,33.5,1262,34.5,1253,36.5,1249,38,1262,42,1270,46,1272,51,1262,55,1265,58,1260,60,1248,62,1263,64,1245,67,1245,70,1240];

const dense = a => a.flatMap((v, i) => [i, v]);

function line(pairs, y, color, width) {
    let d = '';
    for (let i = 0; i < pairs.length; i += 2) {
        d += `${x(pairs[i]).toFixed(1)},${y(pairs[i + 1]).toFixed(1)} `;
    }
    return `<polyline points="${d}" fill="none" stroke="${color}" stroke-width="${width}"/>`;
}

function text(tx, ty, size, color, str, extra = '') {
    return `<text x="${tx}" y="${ty}" font-size="${size}" fill="${color}" ${extra}>${str}</text>`;
}

function grid(y0, step, labels) {
    let out = '';
    labels.forEach((label, i) => {
        const gy = Math.round(y0 + i * step) + 0.5;
        out += `<path d="M143 ${gy}H1131" stroke="${AXIS}" stroke-dasharray="1.5 4.5"/>`;
        out += `<path d="M1132 ${gy}h8M1132 ${gy + Math.round(step / 2)}h4" stroke="${AXIS}"/>`;
        out += text(1200, gy + 6, 18, '#b00000', label, 'text-anchor="end"');
    });
    return out;
}

// Area between two series, recoloured where they cross
function band(a, b, y, above, below) {
    let out = '';
    const quad = (x1, a1, b1, x2, a2, b2, color) =>
        `<path d="M${x1} ${y(a1)}L${x2} ${y(a2)} ${x2} ${y(b2)} ${x1} ${y(b1)}z" fill="${color}"/>`;
    for (let i = 0; i < a.length - 1; i++) {
        const d1 = b[i] - a[i], d2 = b[i + 1] - a[i + 1];
        if (d1 * d2 < 0) {
            const t = d1 / (d1 - d2);
            const m = a[i] + (a[i + 1] - a[i]) * t;
            out += quad(x(i), a[i], b[i], x(i + t), m, m, d1 > 0 ? above : below);
            out += quad(x(i + t), m, m, x(i + 1), a[i + 1], b[i + 1], d2 > 0 ? above : below);
        } else {
            out += quad(x(i), a[i], b[i], x(i + 1), a[i + 1], b[i + 1], d1 + d2 > 0 ? above : below);
        }
    }
    return `<g shape-rendering="crispEdges">${out}</g>`;
}

function drawPrice() {
    const y = v => v / 3;
    let out = grid(116, 43.8, ['19.00', '18.00', '17.00', '16.00', '15.00', '14.00']);
    out += `<path d="M1132.5 105V389" stroke="${AXIS}"/>`;
    candles.forEach(([kind, hi, top, bottom, lo], i) => {
        const c = { r: RED, c: CYAN, w: '#ddd' }[kind];
        const cx = Math.round(x(i)) + 0.5;
        const h = Math.max(1, y(bottom - top));
        out += `<path d="M${cx} ${y(hi)}V${y(top)}M${cx} ${y(bottom)}V${y(lo)}" stroke="${c}"/>`;
        out += `<rect x="${cx - 5}" y="${y(top)}" width="10" height="${h}" fill="${kind === 'r' ? BG : c}" stroke="${c}"/>`;
    });
    out += line(ma250, y, '#0000e6', 1.5);
    out += line(ma120, y, '#a0a0a0', 1.5);
    out += line(ma60, y, '#00d200', 1.5);
    out += line(ma20, y, '#e600e6', 1.5);
    out += line(dense(ma10), y, '#e6e600', 1.5);
    out += line(dense(ma5), y, '#e6e6e6', 1.5);
    [320, 400, 600, 628, 1055].forEach(dx => {
        out += `<rect x="${dx - 2}" y="105" width="4" height="4" fill="#f0f"/>`;
    });
    out += '<path d="M325 116l-15-4M314 108l-5 3 2 6M899 366h-15M890 361l-6 5 6 5" fill="none" stroke="#ddd" stroke-width="1.5"/>';
    out += text(329, 124, 18, '#ccc', '19.13');
    out += text(901, 372, 18, '#ccc', '13.29');
    out += text(886, 293, 40, '#fff', '长短期均线');
    out += text(886, 346, 40, '#fff', '粘合顺上');
    out += '<path d="M1053 346V315M1046 323l7-8 7 8" fill="none" stroke="#fff" stroke-width="3"/>';
    out += '<path d="M1083 251l9 14h-6v17h-7v-17h-5z" fill="#f00"/>';
    out += '<rect x="1045" y="367" width="20" height="20" fill="#8b4510"/>';
    out += text(1046, 384, 18, '#fff', '榜');
    document.getElementById('price').innerHTML = out;
}

function drawVolume() {
    const y = v => 380 + v / 3;
    const base = y(1775);
    let out = grid(428, 60.4, ['90000', '80000', '70000', '60000', '50000', '40000', '30000', '20000', '10000']);
    out += `<path d="M1133 415V981H1207V415" fill="none" stroke="${AXIS}" stroke-width="2"/>`;
    out += band(vm5, vm10, y, '#ff0000', '#005a00');
    out += band(vm10, vm20, y, '#80ff00', '#0000c8');
    out += `<path d="M147 ${base}H1083" stroke="#fff" stroke-width="3"/>`;
    const fills = { r: BG, c: CYAN, y: '#ffff00', m: '#ff0080' };
    volumes.forEach((v, i) => {
        const kind = v[0], top = y(+v.slice(1)), left = Math.round(x(i)) - 5;
        if (kind === 'r') {
            out += `<rect x="${left + 0.5}" y="${top}" width="9" height="${base - top - 1}" fill="${BG}" stroke="${RED}"/>`;
        } else {
            out += `<rect x="${left}" y="${top}" width="11" height="${base - top}" fill="${fills[kind]}"/>`;
        }
    });
    out += `<rect x="597" y="${y(1402)}" width="11" height="${base - y(1402)}" fill="#ff0"/>`;
    out += line(dense(vm20), y, '#00d200', 1);
    out += line(dense(vm10), y, '#e6e600', 1);
    out += line(dense(vm5), y, '#e6e6e6', 1);
    out += line(thickBlue, y, '#0000ff', 2.5);
    out += line(thickRed, y, '#ff0000', 2.5);
    out += line(thickYellow, y, '#ffff00', 2.5);
    out += text(482, 859, 18, '#ff00ff', '金蜘蛛');
    out += text(1003, 558, 39, '#ffff00', '黄金坑');
    document.getElementById('volume').innerHTML = out;
}

drawPrice();
drawVolume();
```
